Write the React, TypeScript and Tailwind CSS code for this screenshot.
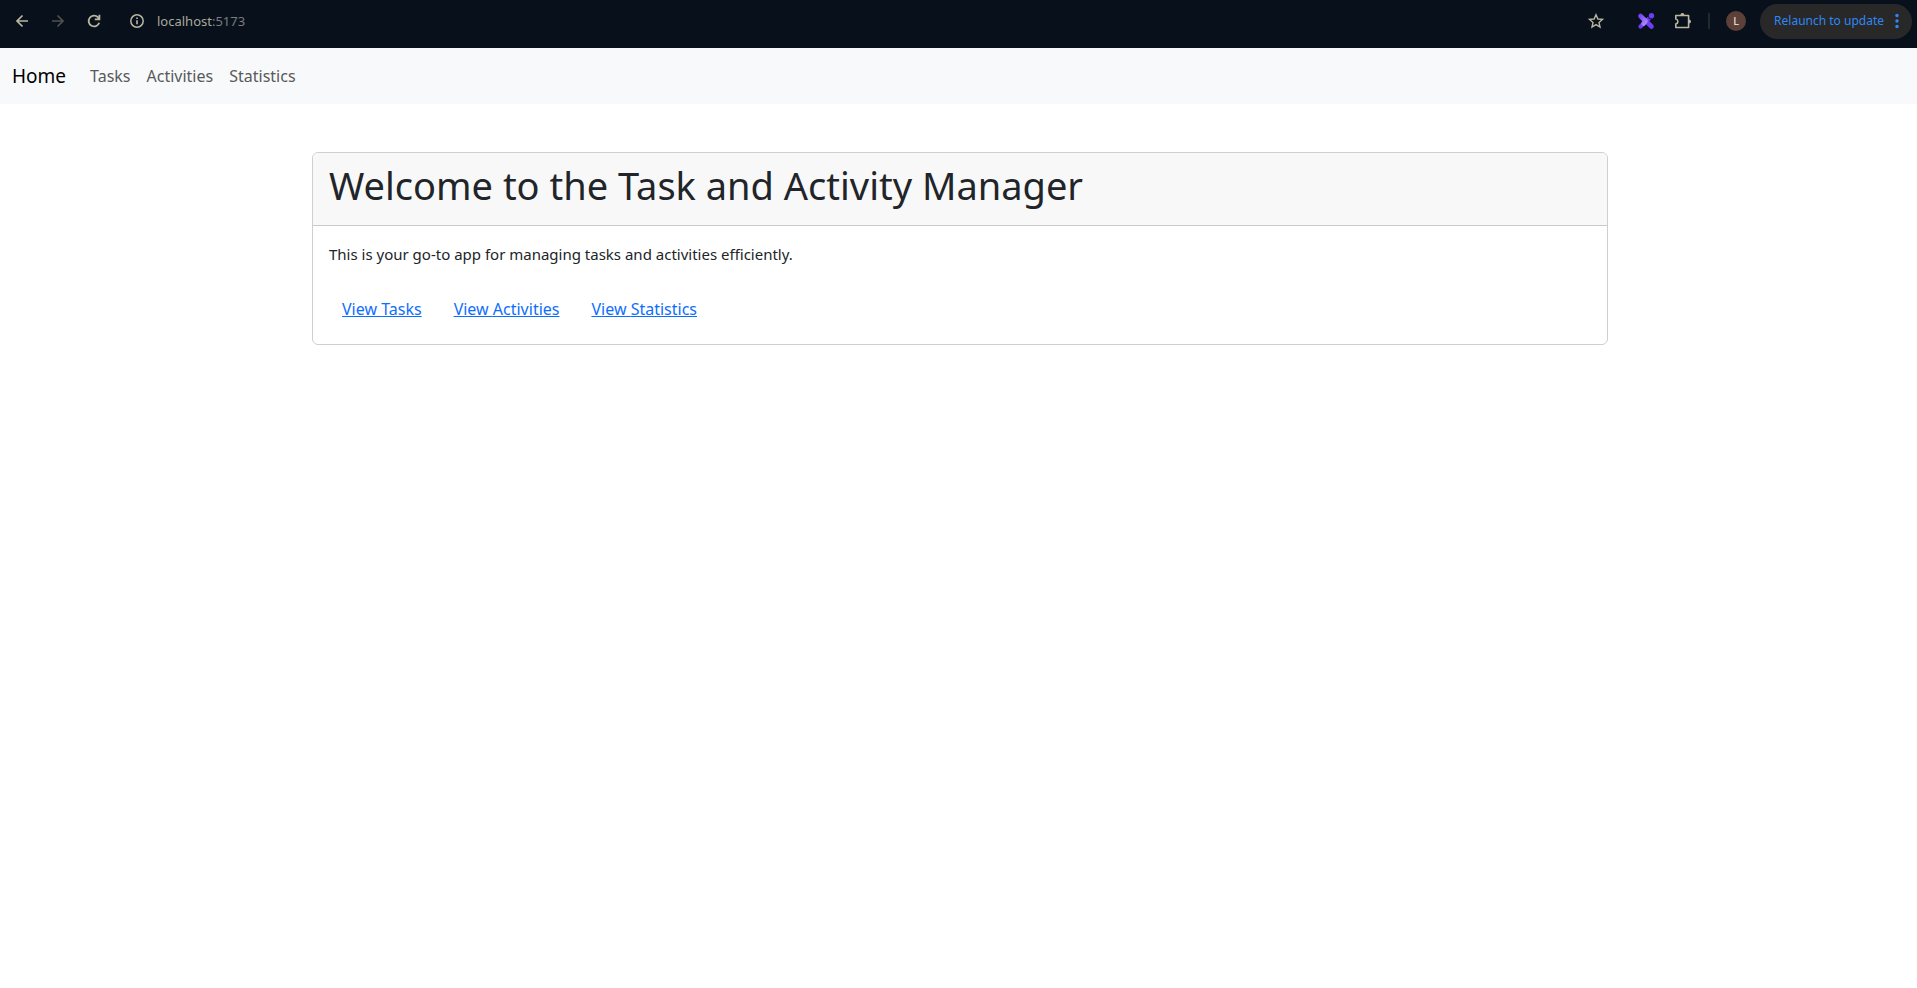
import React from "react";

const sections = ["Tasks", "Activities", "Statistics"];

function BrowserBar() {
  return (
    <div className="flex h-12 items-start bg-[#08101b] text-[#b9b7a0]">
      <div className="flex h-[42px] w-full items-center pr-[5px] pl-3">
        <button aria-label="Back" className="flex size-5 items-center justify-center">
          <svg className="size-5" viewBox="0 0 20 20" fill="none" stroke="currentColor" strokeWidth="1.7">
            <path d="M16 10H5M10.500 4.500L5 10L10.500 15.500" />
          </svg>
        </button>
        <button aria-label="Forward" disabled className="ml-4 flex size-5 items-center justify-center text-[#4f524e]">
          <svg className="size-5" viewBox="0 0 20 20" fill="none" stroke="currentColor" strokeWidth="1.7">
            <path d="M4 10H15M9.500 4.500L15 10L9.500 15.500" />
          </svg>
        </button>
        <button aria-label="Reload" className="ml-4 flex size-5 items-center justify-center">
          <svg className="size-5" viewBox="0 0 20 20" fill="none" stroke="currentColor" strokeWidth="1.8">
            <path d="M15.200 11.800A5.400 5.400 0 1 1 14 6.300L15.300 7.800M10.800 8.300H15.400V3.700" />
          </svg>
        </button>
        <button aria-label="Site information" className="ml-[23px] flex size-5 items-center justify-center">
          <svg className="size-5" viewBox="0 0 20 20" fill="none" stroke="currentColor" strokeWidth="1.5">
            <circle cx="10" cy="10" r="6.200" />
            <path d="M10 9.200V13.200M10 6.500V8" strokeWidth="1.6" />
          </svg>
        </button>
        <span className="ml-[10px] text-[13px] leading-5 text-[#aaa99a]">
          localhost<span className="text-[#7b7d80]">:5173</span>
        </span>
        <button aria-label="Bookmark" className="ml-auto flex size-5 items-center justify-center">
          <svg className="size-5" viewBox="0 0 20 20" fill="none" stroke="currentColor" strokeWidth="1.4">
            <path d="M10 3.700L11.900 8L16.500 8.400L13 11.500L14 16L10 13.600L6 16L7 11.500L3.500 8.400L8.100 8Z" />
          </svg>
        </button>
        <button aria-label="Extension" className="ml-[30px] flex size-5 items-center justify-center">
          <svg className="size-5" viewBox="0 0 20 20" fill="none" strokeLinecap="round">
            <defs>
              <linearGradient id="arm" x1="4" y1="4" x2="12" y2="12" gradientUnits="userSpaceOnUse">
                <stop offset="0" stopColor="#7340f5" />
                <stop offset="1" stopColor="#ad93fa" />
              </linearGradient>
            </defs>
            <path d="M4.500 15.500L13 7.500" stroke="#6d3cf3" strokeWidth="4.200" />
            <path d="M10 10L15.500 15.500" stroke="#6d3cf3" strokeWidth="4.600" />
            <path d="M4.500 5L9.500 10L7.500 12.500" stroke="url(#arm)" strokeWidth="4.600" strokeLinejoin="round" />
            <circle cx="15.300" cy="5" r="3.200" fill="#08101b" />
            <circle cx="15.500" cy="4.700" r="2.700" fill="#6d3cf3" />
          </svg>
        </button>
        <button aria-label="Extensions" className="ml-[17px] flex size-5 items-center justify-center">
          <svg className="size-5" viewBox="0 0 20 20">
            <path
              d="M2.800 4.500H15.600V16.500H2.800V13C5.600 12.300 5.600 8.700 2.800 8Z"
              fill="none"
              stroke="currentColor"
              strokeWidth="1.600"
              strokeLinejoin="round"
            />
            <path d="M7.400 4A2 2 0 0 1 11.400 4ZM16 8.500A2 2 0 0 1 16 12.500Z" fill="currentColor" />
          </svg>
        </button>
        <span className="ml-[15px] h-4 w-0.5 bg-[#24282c]" />
        <button aria-label="Profile" className="ml-4 flex size-5 items-center justify-center rounded-full bg-[#5d4037] text-[11px] text-[#f1ece9]">
          L
        </button>
        <button className="ml-[14px] flex h-[35px] items-center rounded-full bg-[#282828] pl-[14px] text-xs text-[#2f87f5]">
          Relaunch to update
          <svg className="mr-[5px] ml-[3px] size-5" viewBox="0 0 20 20" fill="currentColor">
            <circle cx="10" cy="4.500" r="1.700" />
            <circle cx="10" cy="10" r="1.700" />
            <circle cx="10" cy="15.500" r="1.700" />
          </svg>
        </button>
      </div>
    </div>
  );
}

export default function App() {
  return (
    <div className="min-h-screen bg-white font-['Noto_Sans',sans-serif] text-base text-[#212529]">
      <BrowserBar />
      <nav className="flex h-14 items-center bg-[#f8f9fa] px-3">
        <a href="#home" className="mr-4 text-[19px] text-black">Home</a>
        {sections.map((name) => (
          <a key={name} href={"#" + name} className="p-2 text-[#595a5b]">{name}</a>
        ))}
      </nav>
      <main className="mx-auto mt-12 max-w-[1323px] pr-3 pl-[15px]">
        <section className="overflow-hidden rounded-md border border-[#cfcfcf]">
          <header className="border-b border-[#cacaca] bg-[#f8f8f8] px-4 pt-2 pb-4">
            <h1 className="text-[38px] leading-[48px]">Welcome to the Task and Activity Manager</h1>
          </header>
          <div className="p-4">
            <p className="text-[15px] leading-6">This is your go-to app for managing tasks and activities efficiently.</p>
            <div className="mt-6 flex gap-1.5">
              {sections.map((name) => (
                <a key={name} href={"#" + name} className="border border-transparent px-3 py-1.5 text-[#0d6efd] underline">
                  View {name}
                </a>
              ))}
            </div>
          </div>
        </section>
      </main>
    </div>
  );
}
